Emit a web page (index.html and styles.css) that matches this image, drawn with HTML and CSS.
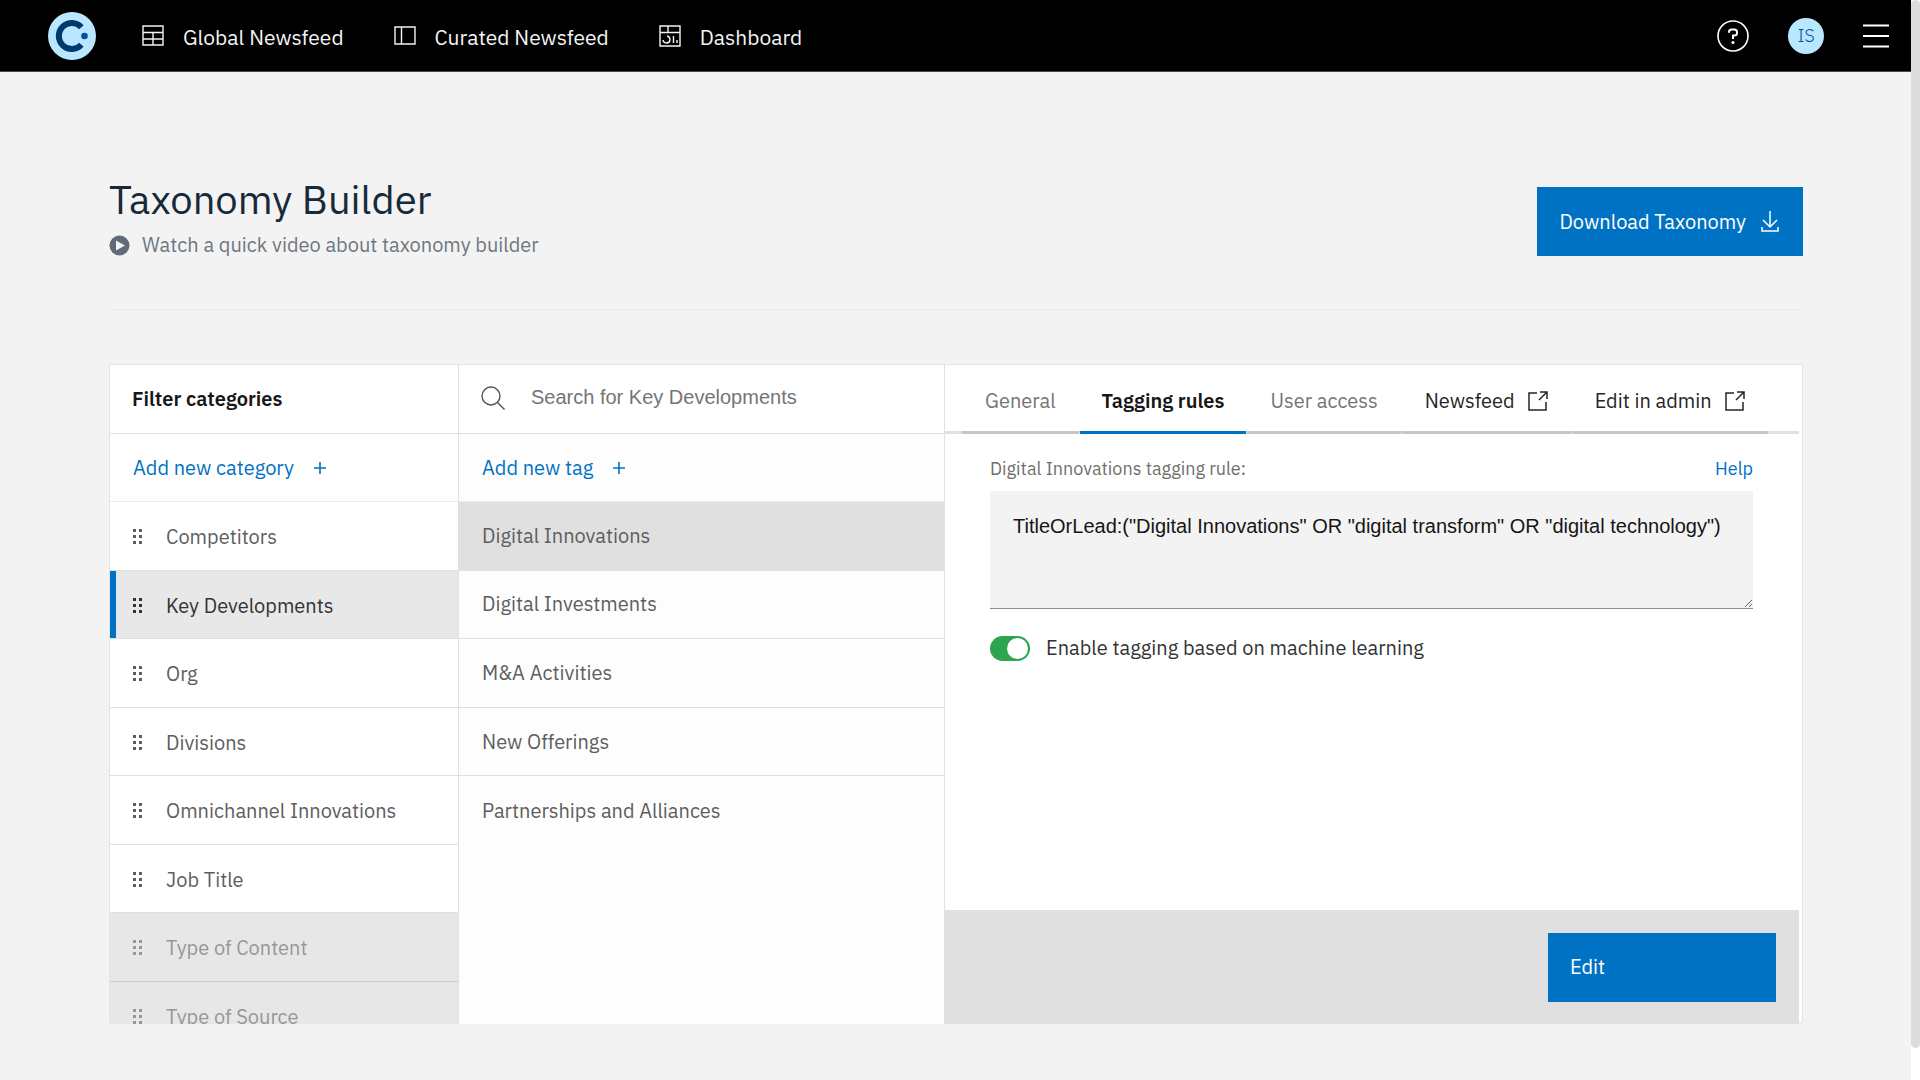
FILE: index.html
```html
<!DOCTYPE html>
<html lang="en">
<head>
    <meta charset="UTF-8">
    <meta name="viewport" content="width=device-width, initial-scale=1.0">
    <title>Taxonomy Builder</title>
    <link rel="stylesheet" href="styles.css">
</head>
<body>
    <!-- Shared icons -->
    <svg class="sprite" aria-hidden="true">
        <symbol id="icon-drag" viewBox="0 0 10 16">
            <path d="M0 0h3v3H0zM6 0h3v3H6zM0 6h3v3H0zM6 6h3v3H6zM0 12h3v3H0zM6 12h3v3H6z" fill="currentColor"/>
        </symbol>
        <symbol id="icon-plus" viewBox="0 0 12 12">
            <path d="M6 0v12M0 6h12" fill="none" stroke="currentColor" stroke-width="1.6"/>
        </symbol>
        <symbol id="icon-launch" viewBox="0 0 20 20">
            <path d="M9 2H1v17h17v-8M12 1h7v7M19 1l-8 8" fill="none" stroke="currentColor" stroke-width="1.5"/>
        </symbol>
    </svg>

    <div class="page">
        <header class="topbar">
            <a class="logo" href="#" aria-label="Home">
                <svg width="48" height="48" viewBox="0 0 48 48">
                    <circle cx="24" cy="24" r="24" fill="#bae6ff"/>
                    <path d="M33.4 15.2A13 13 0 1 0 33.4 32.8" fill="none" stroke="#003a6d" stroke-width="6"/>
                    <circle cx="36.500" cy="24" r="3.300" fill="#00539a"/>
                </svg>
            </a>
            <nav class="nav">
                <a class="nav-link" href="#">
                    <svg width="22" height="22" viewBox="0 0 22 22" fill="none" stroke="currentColor" stroke-width="1.4">
                        <path d="M1 1h20v19H1zM1 7.500h20M1 14h20M11 7.500V20"/>
                    </svg>
                    <span>Global Newsfeed</span>
                </a>
                <a class="nav-link" href="#">
                    <svg width="22" height="22" viewBox="0 0 22 22" fill="none" stroke="currentColor" stroke-width="1.4">
                        <path d="M1 2h20v17H1zM7.500 2v17"/>
                    </svg>
                    <span>Curated Newsfeed</span>
                </a>
                <a class="nav-link" href="#">
                    <svg width="22" height="22" viewBox="0 0 22 22" fill="none" stroke="currentColor" stroke-width="1.4">
                        <path d="M1 1h20v20H1zM1 7.500h20M9 1v6.500M14.500 11v7M18 15v3"/>
                        <path d="M8 11a3.500 3.500 0 1 1-4 4"/>
                    </svg>
                    <span>Dashboard</span>
                </a>
            </nav>
            <div class="topbar-tools">
                <button class="icon-btn" aria-label="Help">
                    <svg width="32" height="32" viewBox="0 0 32 32" fill="none" stroke="currentColor">
                        <circle cx="16" cy="16" r="15" stroke-width="1.6"/>
                        <path d="M12 12.800V12a2.600 2.600 0 0 1 2.600-2.600h2.800A2.600 2.600 0 0 1 20 12v1a2.600 2.600 0 0 1-2.600 2.600H16v3.400" stroke-width="2"/>
                        <circle cx="16" cy="22.500" r="1.500" fill="currentColor" stroke="none"/>
                    </svg>
                </button>
                <button class="avatar">IS</button>
                <button class="icon-btn" aria-label="Menu">
                    <svg width="26" height="24" viewBox="0 0 26 24" fill="none" stroke="currentColor" stroke-width="2">
                        <path d="M0 1.500h26M0 12h26M0 22.500h26"/>
                    </svg>
                </button>
            </div>
        </header>

        <main class="content">
            <div class="page-head">
                <div>
                    <h1>Taxonomy Builder</h1>
                    <a class="video-link" href="#">
                        <svg width="21" height="21" viewBox="0 0 21 21">
                            <circle cx="10.500" cy="10.500" r="10" fill="#5f6b78"/>
                            <path d="M7 5.500l9 5-9 5z" fill="#f3f3f3"/>
                        </svg>
                        Watch a quick video about taxonomy builder
                    </a>
                </div>
                <button class="btn btn-download">
                    Download Taxonomy
                    <svg width="18" height="22" viewBox="0 0 18 22" fill="none" stroke="currentColor" stroke-width="1.5">
                        <path d="M9 0v16M2 9l7 7 7-7M1 16v4h16v-4"/>
                    </svg>
                </button>
            </div>

            <div class="builder">
                <section class="col">
                    <h2 class="col-head">Filter categories</h2>
                    <button class="add-row">Add new category <svg width="12" height="12"><use href="#icon-plus"/></svg></button>
                    <div class="col-list">
                        <ul class="categories">
                            <li><a href="#"><svg width="10" height="16"><use href="#icon-drag"/></svg>Competitors</a></li>
                            <li class="active"><a href="#"><svg width="10" height="16"><use href="#icon-drag"/></svg>Key Developments</a></li>
                            <li><a href="#"><svg width="10" height="16"><use href="#icon-drag"/></svg>Org</a></li>
                            <li><a href="#"><svg width="10" height="16"><use href="#icon-drag"/></svg>Divisions</a></li>
                            <li><a href="#"><svg width="10" height="16"><use href="#icon-drag"/></svg>Omnichannel Innovations</a></li>
                            <li><a href="#"><svg width="10" height="16"><use href="#icon-drag"/></svg>Job Title</a></li>
                            <li class="muted"><a href="#"><svg width="10" height="16"><use href="#icon-drag"/></svg>Type of Content</a></li>
                            <li class="muted"><a href="#"><svg width="10" height="16"><use href="#icon-drag"/></svg>Type of Source</a></li>
                        </ul>
                    </div>
                </section>

                <section class="col col-tags">
                    <label class="col-head search">
                        <svg width="24" height="24" viewBox="0 0 24 24" fill="none" stroke="#525252" stroke-width="1.4">
                            <circle cx="10" cy="10" r="9"/>
                            <path d="M16.500 16.500l7 7"/>
                        </svg>
                        <input type="search" placeholder="Search for Key Developments" aria-label="Search for Key Developments">
                    </label>
                    <button class="add-row">Add new tag <svg width="12" height="12"><use href="#icon-plus"/></svg></button>
                    <div class="col-list">
                        <ul class="tags">
                            <li class="active"><a href="#">Digital Innovations</a></li>
                            <li><a href="#">Digital Investments</a></li>
                            <li><a href="#">M&amp;A Activities</a></li>
                            <li><a href="#">New Offerings</a></li>
                            <li><a href="#">Partnerships and Alliances</a></li>
                        </ul>
                    </div>
                </section>

                <section class="detail">
                    <div class="tabs" role="tablist">
                        <button class="tab" role="tab">General</button>
                        <button class="tab active" role="tab" aria-selected="true">Tagging rules</button>
                        <button class="tab" role="tab">User access</button>
                        <a class="tab tab-link" href="#">Newsfeed <svg width="20" height="20"><use href="#icon-launch"/></svg></a>
                        <a class="tab tab-link" href="#">Edit in admin <svg width="20" height="20"><use href="#icon-launch"/></svg></a>
                    </div>
                    <div class="rule">
                        <div class="rule-head">
                            <label for="rule">Digital Innovations tagging rule:</label>
                            <a href="#">Help</a>
                        </div>
                        <textarea id="rule" spellcheck="false">TitleOrLead:("Digital Innovations" OR "digital transform" OR "digital technology")</textarea>
                        <label class="toggle">
                            <input type="checkbox" checked>
                            Enable tagging based on machine learning
                        </label>
                    </div>
                    <div class="actions">
                        <button class="btn btn-edit">Edit</button>
                    </div>
                </section>
            </div>
        </main>
    </div>
    <div class="scroll-track"><div class="scroll-thumb"></div></div>
</body>
</html>
```
FILE: styles.css
```css
:root {
    --bg: #f3f3f3;
    --blue: #0072c3;
    --text: #161616;
    --text-soft: #5e5e5e;
    --line: #e0e0e0;
    --hover: #e8e8e8;
}

* {
    margin: 0;
    padding: 0;
    box-sizing: border-box;
}

body {
    display: flex;
    min-height: 100vh;
    background-color: var(--bg);
    color: var(--text);
    font-family: "IBM Plex Sans", "Noto Sans", sans-serif;
    font-size: 20px;
    line-height: 28px;
}

a {
    color: inherit;
    text-decoration: none;
}

button {
    border: none;
    background: none;
    color: inherit;
    font: inherit;
    cursor: pointer;
}

ul {
    list-style: none;
}

svg {
    flex: none;
}

.sprite {
    position: absolute;
    width: 0;
    height: 0;
}

.page {
    flex: 1;
    min-width: 0;
}

/* Top bar */
.topbar {
    display: flex;
    align-items: center;
    height: 72px;
    padding: 0 22px 0 48px;
    background-color: #000;
    border-bottom: 1px solid #4d4749;
    color: #f4f4f4;
}

.logo {
    display: flex;
    margin-right: 46px;
}

.nav {
    display: flex;
    gap: 50px;
    font-size: 21px;
}

.nav-link {
    display: flex;
    align-items: center;
    gap: 19px;
}

.nav-link span {
    padding-top: 3px;
}

.topbar-tools {
    display: flex;
    align-items: center;
    gap: 39px;
    margin-left: auto;
}

.icon-btn {
    display: flex;
    color: #fff;
}

.avatar {
    width: 36px;
    height: 36px;
    border-radius: 50%;
    background-color: #bae6ff;
    color: #00539a;
    font-size: 18px;
    font-weight: 300;
}

/* Page heading */
.content {
    padding: 103px 108px 56px 109px;
}

.page-head {
    display: flex;
    justify-content: space-between;
    align-items: flex-start;
    padding-bottom: 50px;
    border-bottom: 1px solid #e8e8e8;
}

h1 {
    color: #172a3a;
    font-size: 40px;
    font-weight: 400;
    line-height: 48px;
}

.video-link {
    display: flex;
    align-items: center;
    gap: 12px;
    margin-top: 8px;
    color: #6f7780;
}

.btn {
    display: flex;
    align-items: center;
    height: 69px;
    background-color: var(--blue);
    color: #fff;
    padding: 0 22px;
}

.btn-download {
    gap: 15px;
    margin-top: 12px;
    padding-right: 24px;
}

/* Builder panel */
.builder {
    display: grid;
    grid-template-columns: 349px 486px 1fr;
    height: 659px;
    margin-top: 54px;
    border: 1px solid #e5e5e5;
    background-color: #fff;
}

.col {
    display: flex;
    flex-direction: column;
    min-height: 0;
    border-right: 1px solid var(--line);
}

.col-tags {
    background-color: #fdfdfd;
}

.col-head {
    display: flex;
    align-items: center;
    flex: none;
    height: 69px;
    padding: 0 22px;
    border-bottom: 1px solid var(--line);
    background-color: #fff;
    font-size: 20px;
    font-weight: 600;
}

.search {
    gap: 26px;
    padding-bottom: 3px;
}

.search input {
    flex: 1;
    min-width: 0;
    border: none;
    outline: none;
    background: none;
    font-family: Arial, "Liberation Sans", sans-serif;
    font-size: 20px;
}

.search input::placeholder {
    color: #757575;
}

.add-row {
    display: flex;
    align-items: center;
    gap: 20px;
    flex: none;
    height: 68px;
    padding: 0 23px;
    border-bottom: 1px solid #ebebeb;
    color: var(--blue);
}

.col-list {
    flex: 1;
    min-height: 0;
    overflow: hidden;
}

.categories {
    display: grid;
    grid-template-rows: repeat(8, 1fr);
    height: 548px;
}

.tags {
    display: grid;
    grid-template-rows: repeat(5, 1fr);
    height: 343px;
}

.categories li,
.tags li {
    display: grid;
    border-bottom: 1px solid var(--line);
    color: var(--text-soft);
}

.categories a,
.tags a {
    display: flex;
    align-items: center;
    gap: 23px;
    padding: 0 23px;
}

.categories a {
    padding-top: 3px;
}

.categories .active {
    background-color: var(--hover);
    box-shadow: inset 6px 0 var(--blue);
    color: #333;
}

.categories .muted {
    background-color: #e7e7e7;
    border-bottom-color: #cccccc;
    color: #979797;
}

.tags .active {
    background-color: #e0e0e0;
}

.tags li:last-child {
    border-bottom: none;
}

/* Tag details */
.detail {
    display: flex;
    flex-direction: column;
    height: 659px;
    min-width: 0;
    margin-right: 3px;
}

.tabs {
    display: flex;
    gap: 1px;
    flex: none;
    height: 69px;
    padding-left: 17px;
    box-shadow: inset 0 -3px var(--line);
}

.tab {
    display: flex;
    align-items: center;
    gap: 13px;
    padding: 5px 23px 0;
    border-bottom: 3px solid #c6c6c6;
    color: #757575;
    white-space: nowrap;
}

.tab.active {
    padding-right: 22px;
    padding-left: 22px;
    border-bottom-color: var(--blue);
    color: var(--text);
    font-weight: 600;
}

.tab-link {
    color: #262626;
}

.rule {
    flex: 1;
    padding: 21px 46px 0 45px;
}

.rule-head {
    display: flex;
    justify-content: space-between;
    margin-bottom: 8px;
    color: #6f6f6f;
    font-size: 18px;
}

.rule-head a {
    color: var(--blue);
}

textarea {
    display: block;
    width: 100%;
    height: 118px;
    padding: 21px 23px;
    border: none;
    border-bottom: 1px solid #8d8d8d;
    outline: none;
    background-color: #f3f3f3;
    color: var(--text);
    font-family: Arial, "Liberation Sans", sans-serif;
    font-size: 20px;
    line-height: 28px;
    resize: vertical;
}

.toggle {
    display: flex;
    align-items: center;
    gap: 16px;
    margin-top: 25px;
    color: #333;
}

.toggle input {
    appearance: none;
    display: flex;
    justify-content: flex-end;
    width: 40px;
    height: 25px;
    padding: 2px;
    border-radius: 13px;
    background-color: #2da44e;
}

.toggle input::before {
    content: "";
    width: 21px;
    height: 21px;
    border-radius: 50%;
    background-color: #fff;
}

.actions {
    display: flex;
    justify-content: flex-end;
    align-items: center;
    flex: none;
    height: 114px;
    padding-right: 23px;
    background-color: var(--line);
}

.btn-edit {
    width: 228px;
}

/* Page scrollbar */
.scroll-track {
    width: 9px;
    background-color: #fff;
}

.scroll-thumb {
    height: 97vh;
    border-radius: 5px;
    background-color: #dcdcdc;
}
```
